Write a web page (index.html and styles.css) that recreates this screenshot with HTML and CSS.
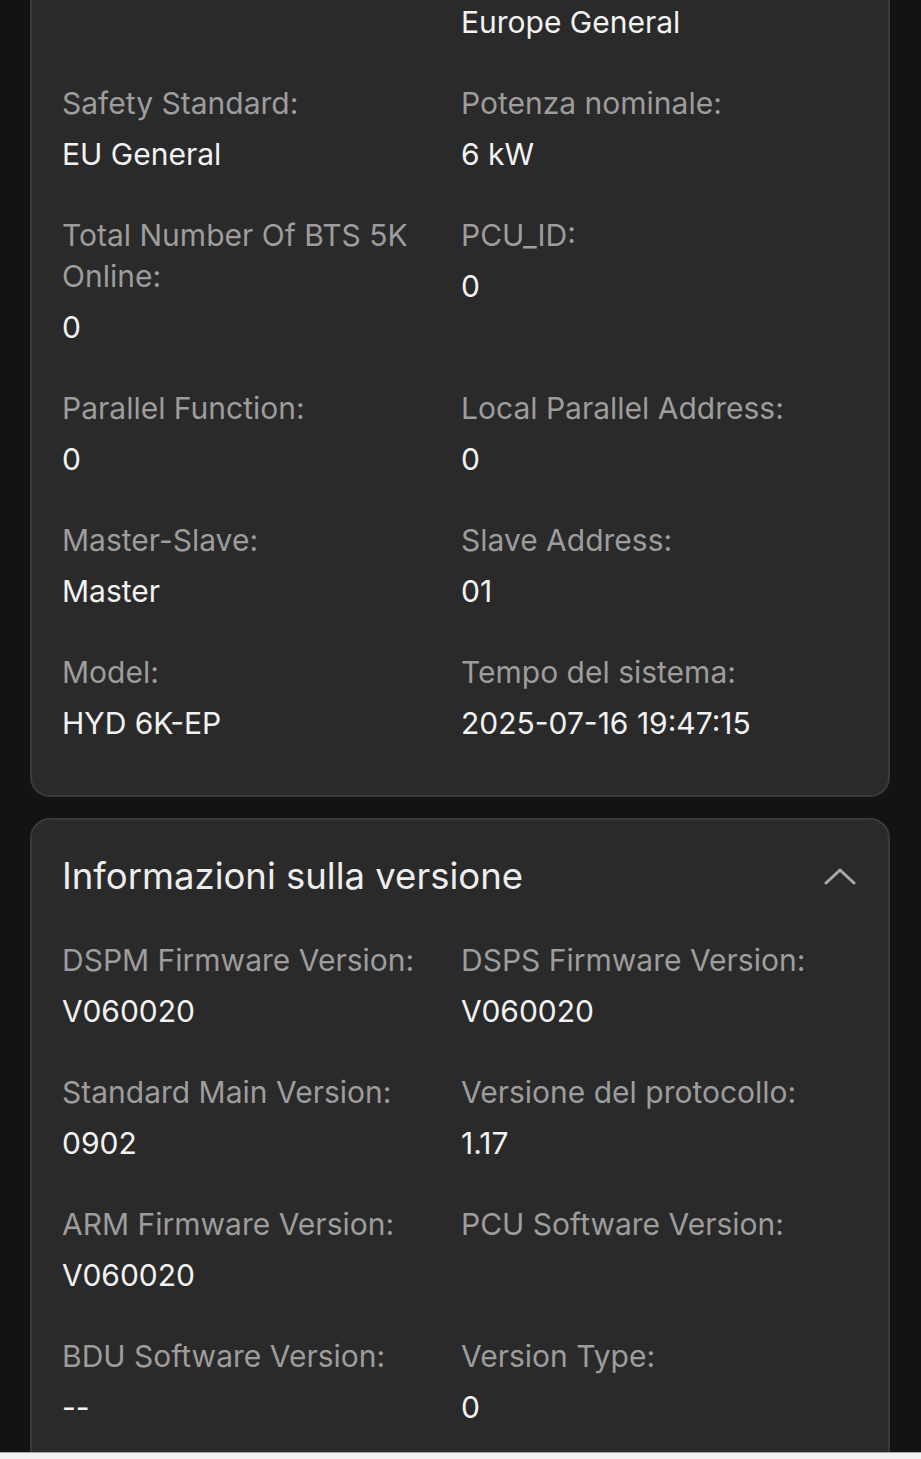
FILE: index.html
```html
<!DOCTYPE html>
<html lang="it">
<head>
    <meta charset="UTF-8">
    <meta name="viewport" content="width=device-width, initial-scale=1.0">
    <title>Informazioni dispositivo</title>
    <link rel="stylesheet" href="styles.css">
</head>
<body>
    <div class="screen">
        <div class="card card-cut">
            <div class="grid">
                <div class="cell">
                </div>
                <div class="cell">
                    <div class="value">Europe General</div>
                </div>

                <div class="cell">
                    <div class="label">Safety Standard:</div>
                    <div class="value">EU General</div>
                </div>
                <div class="cell">
                    <div class="label">Potenza nominale:</div>
                    <div class="value">6 kW</div>
                </div>

                <div class="cell">
                    <div class="label">Total Number Of BTS 5K Online:</div>
                    <div class="value">0</div>
                </div>
                <div class="cell">
                    <div class="label">PCU_ID:</div>
                    <div class="value">0</div>
                </div>

                <div class="cell">
                    <div class="label">Parallel Function:</div>
                    <div class="value">0</div>
                </div>
                <div class="cell">
                    <div class="label">Local Parallel Address:</div>
                    <div class="value">0</div>
                </div>

                <div class="cell">
                    <div class="label">Master-Slave:</div>
                    <div class="value">Master</div>
                </div>
                <div class="cell">
                    <div class="label">Slave Address:</div>
                    <div class="value">01</div>
                </div>

                <div class="cell">
                    <div class="label">Model:</div>
                    <div class="value">HYD 6K-EP</div>
                </div>
                <div class="cell">
                    <div class="label">Tempo del sistema:</div>
                    <div class="value">2025-07-16 19:47:15</div>
                </div>
            </div>
        </div>

        <div class="card">
            <div class="card-head">
                <h2 class="card-title">Informazioni sulla versione</h2>
                <svg class="chevron" width="32" height="18" viewBox="0 0 32 18">
                    <path d="M2 16 L16 3 L30 16" fill="none" stroke="#a9a9a9" stroke-width="3" stroke-linecap="round" stroke-linejoin="round"/>
                </svg>
            </div>
            <div class="grid">
                <div class="cell">
                    <div class="label">DSPM Firmware Version:</div>
                    <div class="value">V060020</div>
                </div>
                <div class="cell">
                    <div class="label">DSPS Firmware Version:</div>
                    <div class="value">V060020</div>
                </div>

                <div class="cell">
                    <div class="label">Standard Main Version:</div>
                    <div class="value">0902</div>
                </div>
                <div class="cell">
                    <div class="label">Versione del protocollo:</div>
                    <div class="value">1.17</div>
                </div>

                <div class="cell">
                    <div class="label">ARM Firmware Version:</div>
                    <div class="value">V060020</div>
                </div>
                <div class="cell">
                    <div class="label">PCU Software Version:</div>
                    <div class="value"></div>
                </div>

                <div class="cell">
                    <div class="label">BDU Software Version:</div>
                    <div class="value">--</div>
                </div>
                <div class="cell">
                    <div class="label">Version Type:</div>
                    <div class="value">0</div>
                </div>
            </div>
        </div>
    </div>
    <div class="nav-strip"></div>
</body>
</html>
```

FILE: styles.css
```css
html, body {
    margin: 0;
    padding: 0;
}
body {
    background-color: #131313;
    font-family: Inter, "Noto Sans", sans-serif;
    color: #f0f0f0;
}
.screen {
    height: 1452px;
    overflow: hidden;
    padding: 0 31px 0 30px;
    display: flex;
    flex-direction: column;
    gap: 21px;
}
.card {
    background-color: #2a2a2a;
    border: 2px solid #3a3a3a;
    border-radius: 20px;
    padding: 32px 30px 51px;
    flex-shrink: 0;
}
.card-cut {
    border-top: 0;
    border-top-left-radius: 0;
    border-top-right-radius: 0;
    padding-top: 2px;
}
.card-head {
    display: flex;
    align-items: center;
    justify-content: space-between;
    margin-bottom: 40px;
}
.card-title {
    margin: 0;
    font-size: 36.5px;
    font-weight: 400;
    line-height: 48px;
    color: #eeeeee;
}
.chevron {
    margin-right: 2px;
}
.grid {
    display: grid;
    grid-template-columns: 399px 1fr;
    row-gap: 40px;
}
.cell {
    padding-right: 24px;
}
.label {
    font-size: 30px;
    line-height: 41px;
    color: #9d9d9d;
    margin-bottom: 10px;
}
.value {
    font-size: 30px;
    line-height: 41px;
    min-height: 41px;
    color: #f2f2f2;
}
.nav-strip {
    height: 6px;
    background-color: #f2f2f2;
    border-top: 1px solid #a8a8a8;
}
```
